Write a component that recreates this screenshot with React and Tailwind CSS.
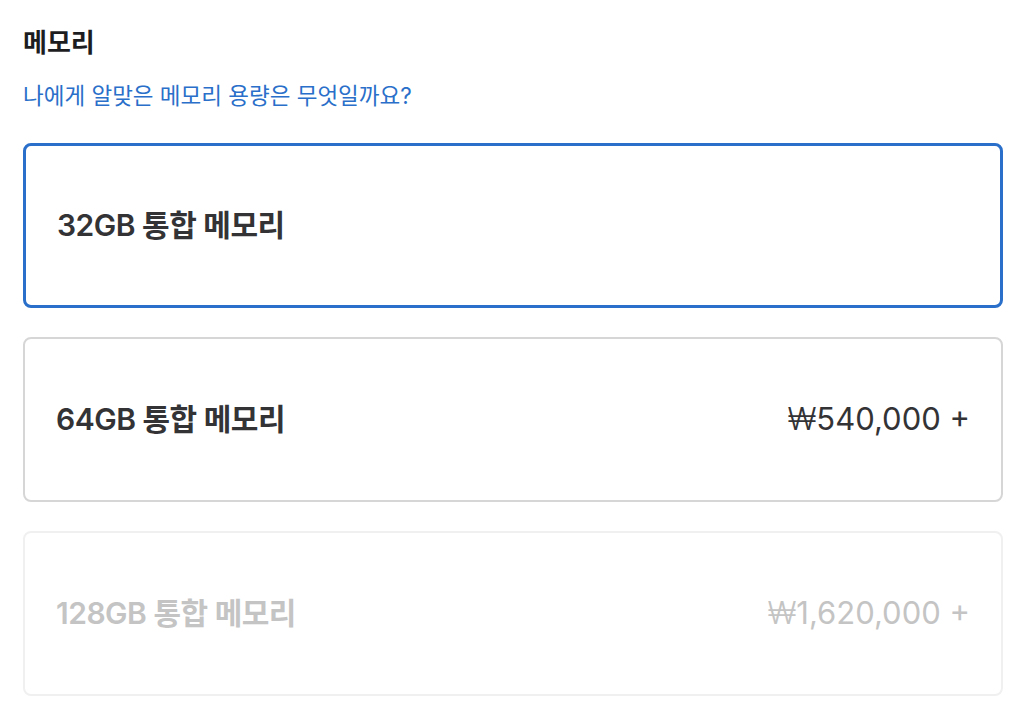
import React from 'react';

const font = { fontFamily: 'Inter, "Noto Sans CJK KR", sans-serif' };

const options = [
  { size: '32GB', price: null, state: 'selected' },
  { size: '64GB', price: '540,000 +', state: 'normal' },
  { size: '128GB', price: '1,620,000 +', state: 'disabled' },
];

const cardClass = {
  selected: 'border-[3px] border-[#2a6fc9] text-[#333336]',
  normal: 'border-2 border-[#d6d6d6] text-[#333336]',
  disabled: 'border-2 border-[#f0f0f0] text-[#c4c4c4]',
};

export default function App() {
  return (
    <div className="min-h-[724px] w-[1030px] bg-white px-[23px] pt-[25px]" style={font}>
      <h2 className="text-[26px] font-bold leading-[36px] text-[#1d1d1f]">메모리</h2>
      <a className="mt-[20px] block text-[22.5px] leading-[30px] text-[#2a6fc9]">
        나에게 알맞은 메모리 용량은 무엇일까요?
      </a>
      <div className="mt-[32px] flex w-[980px] flex-col gap-[29px]">
        {options.map((o) => (
          <div
            key={o.size}
            className={`flex h-[165px] items-center justify-between rounded-[8px] px-[31px] ${cardClass[o.state]}`}
          >
            <span className="text-[30px] font-semibold tracking-[-0.5px]">{o.size} 통합 메모리</span>
            {o.price && (
              <span className="text-[31px]">
                <span className="font-light">₩</span>
                {o.price}
              </span>
            )}
          </div>
        ))}
      </div>
    </div>
  );
}
